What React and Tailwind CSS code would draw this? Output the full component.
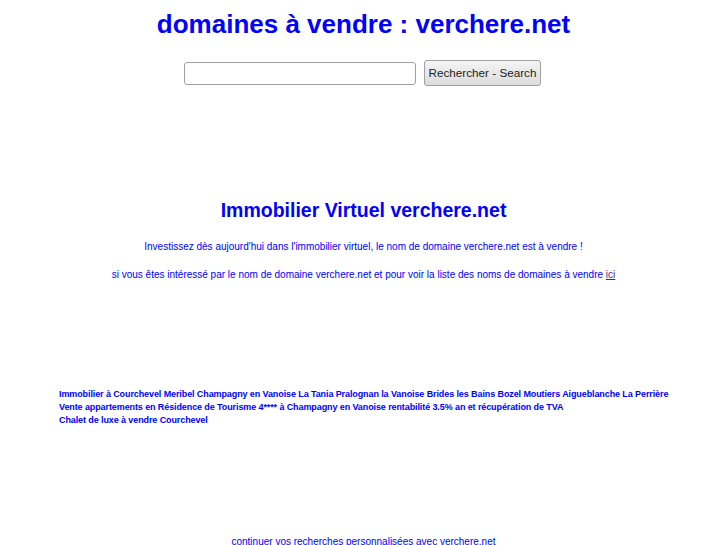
export default function App() {
  return (
    <div className="w-[727px] h-[545px] overflow-hidden bg-white text-[#0000ff]" style={{ fontFamily: '"Liberation Sans", Arial, sans-serif' }}>
      <h1 className="text-center font-bold text-[26px] leading-[30px] pt-[9px]">domaines à vendre : verchere.net</h1>
      <div className="flex justify-center items-center gap-[8px] mt-[21px] pr-[2px]">
        <input type="text" className="w-[232px] h-[23px] border border-[#a0a0a0] rounded-[3px] bg-white" />
        <button className="h-[26px] px-[4px] border border-[#a0a0a0] rounded-[3px] bg-gradient-to-b from-[#f4f4f4] to-[#dcdcdc] text-[#222] text-[11.7px]">Rechercher - Search</button>
      </div>
      <h2 className="text-center font-bold text-[19.5px] leading-[22px] mt-[113px]">Immobilier Virtuel verchere.net</h2>
      <p className="text-center text-[10px] leading-[13px] mt-[19px]">Investissez dès aujourd'hui dans l'immobilier virtuel, le nom de domaine verchere.net est à vendre !</p>
      <p className="text-center text-[10px] leading-[13px] mt-[15px]">si vous êtes intéressé par le nom de domaine verchere.net et pour voir la liste des noms de domaines à vendre <a className="underline text-[#551a8b]">ici</a></p>
      <div className="pl-[59px] mt-[107px] font-bold text-[9px] leading-[13px] tracking-[-0.1px]">
        <div>Immobilier à Courchevel Meribel Champagny en Vanoise La Tania Pralognan la Vanoise Brides les Bains Bozel Moutiers Aigueblanche La Perrière</div>
        <div>Vente appartements en Résidence de Tourisme 4**** à Champagny en Vanoise rentabilité 3.5% an et récupération de TVA</div>
        <div>Chalet de luxe à vendre Courchevel</div>
      </div>
      <p className="text-center text-[10px] leading-[13px] mt-[108px]">continuer vos recherches personnalisées avec verchere.net</p>
    </div>
  );
}
